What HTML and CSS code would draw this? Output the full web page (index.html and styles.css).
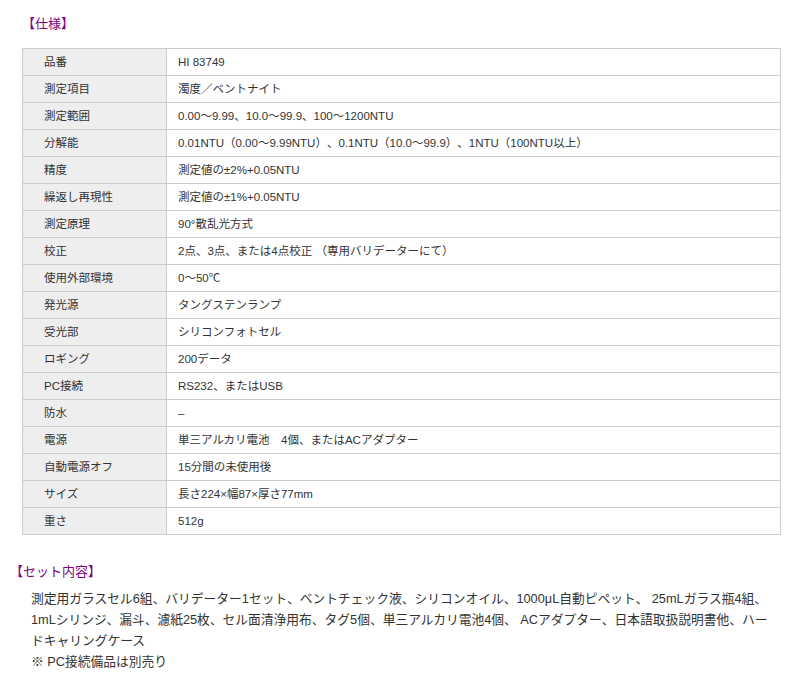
FILE: index.html
```html
<!DOCTYPE html>
<html lang="ja">
<head>
<meta charset="utf-8">
<title>仕様</title>
<link rel="stylesheet" href="styles.css">
</head>
<body>
<div class="page">
  <h2 class="title spec-title">【仕様】</h2>
  <table class="spec">
    <colgroup><col class="col-head"><col></colgroup>
    <tbody>
      <tr><th>品番</th><td>HI 83749</td></tr>
      <tr><th>測定項目</th><td>濁度／ベントナイト</td></tr>
      <tr><th>測定範囲</th><td>0.00〜9.99、10.0〜99.9、100〜1200NTU</td></tr>
      <tr><th>分解能</th><td>0.01NTU（0.00〜9.99NTU）、0.1NTU（10.0〜99.9）、1NTU（100NTU以上）</td></tr>
      <tr><th>精度</th><td>測定値の±2%+0.05NTU</td></tr>
      <tr><th>繰返し再現性</th><td>測定値の±1%+0.05NTU</td></tr>
      <tr><th>測定原理</th><td>90°散乱光方式</td></tr>
      <tr><th>校正</th><td>2点、3点、または4点校正 （専用バリデーターにて）</td></tr>
      <tr><th>使用外部環境</th><td>0〜50℃</td></tr>
      <tr><th>発光源</th><td>タングステンランプ</td></tr>
      <tr><th>受光部</th><td>シリコンフォトセル</td></tr>
      <tr><th>ロギング</th><td>200データ</td></tr>
      <tr><th>PC接続</th><td>RS232、またはUSB</td></tr>
      <tr><th>防水</th><td>–</td></tr>
      <tr><th>電源</th><td>単三アルカリ電池　4個、またはACアダプター</td></tr>
      <tr><th>自動電源オフ</th><td>15分間の未使用後</td></tr>
      <tr><th>サイズ</th><td>長さ224×幅87×厚さ77mm</td></tr>
      <tr><th>重さ</th><td>512g</td></tr>
    </tbody>
  </table>

  <h2 class="title set-title">【セット内容】</h2>
  <div class="set-body">
    <p class="set-list">測定用ガラスセル6組、バリデーター1セット、ベントチェック液、シリコンオイル、1000μL自動ピペット、 25mLガラス瓶4組、1mLシリンジ、漏斗、濾紙25枚、セル面清浄用布、タグ5個、単三アルカリ電池4個、 ACアダプター、日本語取扱説明書他、ハードキャリングケース</p>
    <p class="set-note">※ PC接続備品は別売り</p>
  </div>
</div>
</body>
</html>
```

FILE: styles.css
```css
html, body {
  margin: 0;
  padding: 0;
  background: #ffffff;
}

body {
  font-family: "Liberation Sans", "Noto Sans CJK JP", sans-serif;
  color: #333333;
  text-spacing-trim: space-all;
}

.page {
  padding: 14px 0 0 0;
}

.title {
  margin: 0;
  font-size: 13px;
  font-weight: normal;
  line-height: 20px;
  color: #800080;
}

.spec-title {
  padding-left: 22px;
}

.spec {
  margin: 14px 0 0 22px;
  width: 759px;
  border-collapse: collapse;
  table-layout: fixed;
  font-size: 11.5px;
}

.col-head {
  width: 144px;
}

.spec th,
.spec td {
  border: 1px solid #cccccc;
  height: 16px;
  line-height: 16px;
  padding: 5px 0;
  text-align: left;
  font-weight: normal;
  white-space: nowrap;
}

.spec th {
  background: #eeeeee;
  padding-left: 21px;
}

.spec td {
  background: #ffffff;
  padding-left: 11px;
}

.set-title {
  margin-top: 26px;
  padding-left: 10px;
  line-height: 21px;
}

.set-body {
  padding: 6px 24px 0 31px;
  font-size: 12.75px;
  line-height: 21px;
}

.set-list,
.set-note {
  margin: 0;
}
```
